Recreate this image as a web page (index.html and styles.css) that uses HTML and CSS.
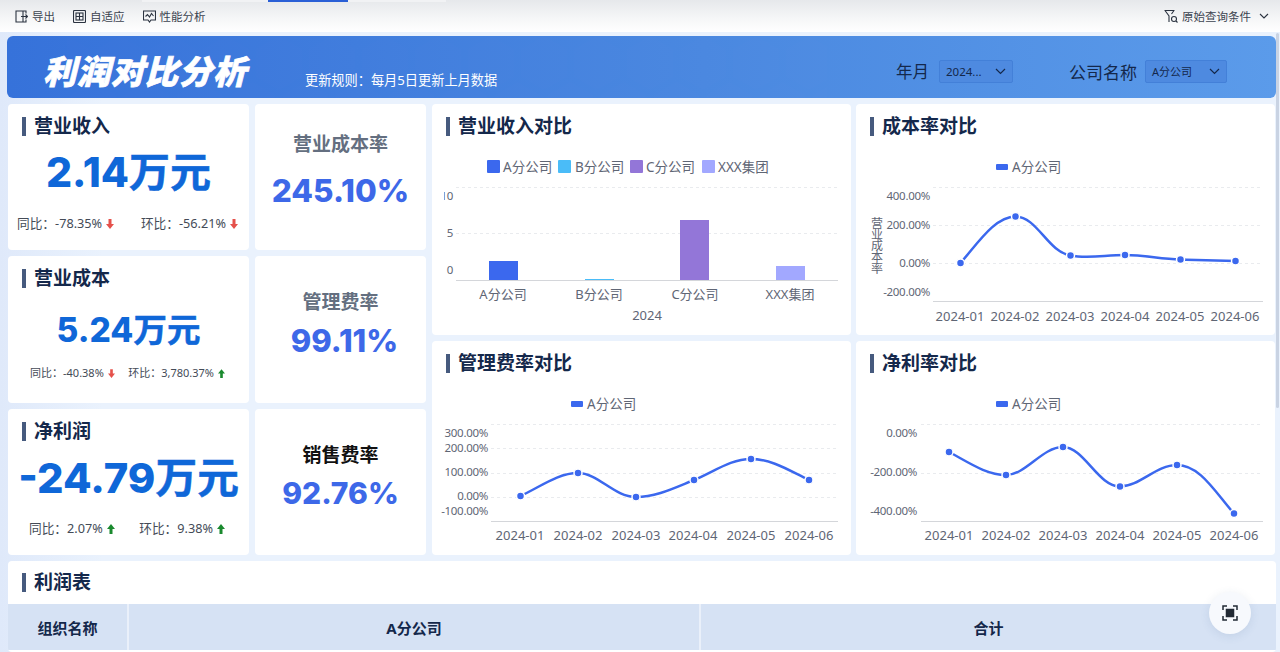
FILE: index.html
```html
<!DOCTYPE html>
<html lang="zh-CN">

<head>
  <meta charset="UTF-8" />
  <meta name="viewport" content="width=device-width, initial-scale=1.0" />
  <title>利润对比分析</title>
  <link rel="stylesheet" href="styles.css">
</head>

<body>
  <div class="toolbar">
    <i class="tab-line"><b></b></i>
    <a class="tool">
      <svg width="13" height="13" viewBox="0 0 13 13"><path d="M8 1H1v11h7zM8 1h3v2.500M8 12h3V9.500M6 6.500h6.500M10.500 4.500l2 2-2 2" /></svg>
      导出
    </a>
    <a class="tool">
      <svg width="13" height="13" viewBox="0 0 13 13"><rect x="0.500" y="0.500" width="12" height="12" rx="1" /><rect x="3" y="3" width="7" height="7" /><path d="M6.500 3v7M3 6.500h7" /></svg>
      自适应
    </a>
    <a class="tool">
      <svg width="13" height="13" viewBox="0 0 13 13"><path d="M0.500 1h12v9H8L6.500 12 5 10H0.500zM2.500 6.500l2-2 2 2.500 2-3.500 2 2.500" /></svg>
      性能分析
    </a>
    <a class="tool tool-right">
      <svg width="14" height="14" viewBox="0 0 14 14"><path d="M0.500 1.500h10M1 1.500 5 7v6M10 1.500 7.500 5" /><circle cx="10" cy="10" r="2.500" /><path d="m12 12 1.500 1.500" /></svg>
      原始查询条件
      <svg class="chev" width="10" height="6" viewBox="0 0 10 6"><path d="m1 1 4 4 4-4" /></svg>
    </a>
  </div>

  <div class="page">
    <i class="thumb"></i>

    <div class="banner">
      <svg class="hexes" width="760" height="62">
        <defs>
          <pattern id="hex" width="53" height="92" patternUnits="userSpaceOnUse" x="-26" y="0">
            <path d="M26 0 49 13V41L26 54 3 41V13z" />
            <path d="M52.500 46 75.500 59V87L52.500 100 29.500 87V59z" />
            <path d="M-0.500 46 22.500 59V87L-0.500 100-23.500 87V59z" />
          </pattern>
        </defs>
        <rect width="760" height="62" fill="url(#hex)" />
      </svg>
      <h1>利润对比分析</h1>
      <p class="rule">更新规则：每月5日更新上月数据</p>
      <div class="filters">
        <label>年月</label>
        <div class="select sel-date"><span>2024...</span><svg width="11" height="7" viewBox="0 0 11 7"><path d="m1 1 4.500 4.500L10 1" /></svg></div>
        <label class="company">公司名称</label>
        <div class="select sel-company"><span>A分公司</span><svg width="11" height="7" viewBox="0 0 11 7"><path d="m1 1 4.500 4.500L10 1" /></svg></div>
      </div>
    </div>

    <div class="board">
      <div class="kpis">
        <div class="card kpi">
          <h2 class="head">营业收入</h2>
          <div class="money">2.14<em>万元</em></div>
          <div class="stats">
            <span>同比：-78.35%<svg class="down" width="8" height="10" viewBox="0 0 8 10"><path d="M2.500 0h3v5H8L4 10 0 5h2.500z" /></svg></span>
            <span>环比：-56.21%<svg class="down" width="8" height="10" viewBox="0 0 8 10"><path d="M2.500 0h3v5H8L4 10 0 5h2.500z" /></svg></span>
          </div>
        </div>
        <div class="card rate">
          <h3>营业成本率</h3>
          <div class="pct">245.10%</div>
        </div>

        <div class="card kpi kpi-mid">
          <h2 class="head">营业成本</h2>
          <div class="money">5.24<em>万元</em></div>
          <div class="stats">
            <span>同比：-40.38%<svg class="down" width="7" height="9" viewBox="0 0 8 10"><path d="M2.500 0h3v5H8L4 10 0 5h2.500z" /></svg></span>
            <span>环比：3,780.37%<svg class="up" width="7" height="9" viewBox="0 0 8 10"><path d="M2.500 10h3V5H8L4 0 0 5h2.500z" /></svg></span>
          </div>
        </div>
        <div class="card rate rate-mid">
          <h3>管理费率</h3>
          <div class="pct">99.11%</div>
        </div>

        <div class="card kpi kpi-last">
          <h2 class="head">净利润</h2>
          <div class="money">-24.79<em>万元</em></div>
          <div class="stats">
            <span>同比：2.07%<svg class="up" width="8" height="10" viewBox="0 0 8 10"><path d="M2.500 10h3V5H8L4 0 0 5h2.500z" /></svg></span>
            <span>环比：9.38%<svg class="up" width="8" height="10" viewBox="0 0 8 10"><path d="M2.500 10h3V5H8L4 0 0 5h2.500z" /></svg></span>
          </div>
        </div>
        <div class="card rate rate-last">
          <h3>销售费率</h3>
          <div class="pct">92.76%</div>
        </div>
      </div>

      <div class="charts">
        <div class="card chart">
          <h2 class="head">营业收入对比</h2>
          <svg viewBox="432 148 419 187" width="419" height="187">
            <defs>
              <clipPath id="ylabels"><rect x="444" y="180" width="20" height="100" /></clipPath>
            </defs>
            <rect class="c-a" x="487" y="160" width="13" height="13" rx="1" /><text x="503" y="172">A分公司</text>
            <rect class="c-b" x="558" y="160" width="13" height="13" rx="1" /><text x="575" y="172">B分公司</text>
            <rect class="c-c" x="630" y="160" width="13" height="13" rx="1" /><text x="646" y="172">C分公司</text>
            <rect class="c-d" x="702" y="160" width="13" height="13" rx="1" /><text x="718" y="172">XXX集团</text>
            <path class="grid" d="M456 187.500H838M456 233.500H838" />
            <g clip-path="url(#ylabels)">
              <text class="yl" x="453" y="200">10</text>
              <text class="yl" x="453" y="237">5</text>
              <text class="yl" x="453" y="274">0</text>
            </g>
            <rect class="c-a" x="489" y="261" width="29" height="19" />
            <rect class="c-b" x="585" y="279" width="29" height="1" />
            <rect class="c-c" x="680" y="220" width="29" height="60" />
            <rect class="c-d" x="776" y="266" width="29" height="14" />
            <path class="axis" d="M456 280.500H838" />
            <text class="xl" x="503" y="299">A分公司</text>
            <text class="xl" x="599" y="299">B分公司</text>
            <text class="xl" x="695" y="299">C分公司</text>
            <text class="xl" x="790" y="299">XXX集团</text>
            <text class="xl" x="647" y="320">2024</text>
          </svg>
        </div>

        <div class="card chart">
          <h2 class="head">成本率对比</h2>
          <svg viewBox="856 148 419 187" width="419" height="187">
            <rect class="c-a" x="996" y="164" width="12" height="6" rx="1" /><text x="1012" y="172">A分公司</text>
            <path class="grid" d="M933 187.500H1263M933 225.500H1263M933 263.500H1263" />
            <text class="yl" x="930" y="200">400.00%</text>
            <text class="yl" x="930" y="229">200.00%</text>
            <text class="yl" x="930" y="267">0.00%</text>
            <text class="yl" x="930" y="296">-200.00%</text>
            <text class="side" x="876" y="217">营业成本率</text>
            <path class="axis" d="M933 301.500H1263" />
            <path class="line" d="M960.500 263C978 243 995 216.500 1015.500 216.500C1037 216.500 1048 252 1070.500 255.500C1088 259 1105 255 1125 255C1145 255 1160 259 1180.500 259.500C1200 260 1220 260.500 1235.500 261" />
            <circle class="dot" cx="960.500" cy="263" r="4" />
            <circle class="dot" cx="1015.500" cy="216.500" r="4" />
            <circle class="dot" cx="1070.500" cy="255.500" r="4" />
            <circle class="dot" cx="1125" cy="255" r="4" />
            <circle class="dot" cx="1180.500" cy="259.500" r="4" />
            <circle class="dot" cx="1235.500" cy="261" r="4" />
            <text class="xl" x="960" y="321">2024-01</text>
            <text class="xl" x="1015" y="321">2024-02</text>
            <text class="xl" x="1070" y="321">2024-03</text>
            <text class="xl" x="1125" y="321">2024-04</text>
            <text class="xl" x="1180" y="321">2024-05</text>
            <text class="xl" x="1235" y="321">2024-06</text>
          </svg>
        </div>

        <div class="card chart chart-low">
          <h2 class="head">管理费率对比</h2>
          <svg viewBox="432 385 419 170" width="419" height="170">
            <rect class="c-a" x="571" y="401" width="12" height="6" rx="1" /><text x="587" y="409">A分公司</text>
            <path class="grid" d="M491 424.500H838M491 448.500H838M491 473.500H838M491 497.500H838" />
            <text class="yl" x="488" y="437">300.00%</text>
            <text class="yl" x="488" y="452">200.00%</text>
            <text class="yl" x="488" y="476">100.00%</text>
            <text class="yl" x="488" y="500">0.00%</text>
            <text class="yl" x="488" y="515">-100.00%</text>
            <path class="axis" d="M491 521.500H838" />
            <path class="line" d="M520.500 496C540 487 558 473 578 473C598 473 614 497 636 497C656 497 674 488 694 480C714 472 730 459 751 459C772 459 790 471 809 480" />
            <circle class="dot" cx="520.500" cy="496" r="4" />
            <circle class="dot" cx="578" cy="473" r="4" />
            <circle class="dot" cx="636" cy="497" r="4" />
            <circle class="dot" cx="694" cy="480" r="4" />
            <circle class="dot" cx="751" cy="459" r="4" />
            <circle class="dot" cx="809" cy="480" r="4" />
            <text class="xl" x="520" y="540">2024-01</text>
            <text class="xl" x="578" y="540">2024-02</text>
            <text class="xl" x="636" y="540">2024-03</text>
            <text class="xl" x="693" y="540">2024-04</text>
            <text class="xl" x="751" y="540">2024-05</text>
            <text class="xl" x="809" y="540">2024-06</text>
          </svg>
        </div>

        <div class="card chart chart-low">
          <h2 class="head">净利率对比</h2>
          <svg viewBox="856 385 419 170" width="419" height="170">
            <rect class="c-a" x="996" y="401" width="12" height="6" rx="1" /><text x="1012" y="409">A分公司</text>
            <path class="grid" d="M921 424.500H1263M921 473.500H1263" />
            <text class="yl" x="917" y="437">0.00%</text>
            <text class="yl" x="917" y="476">-200.00%</text>
            <text class="yl" x="917" y="515">-400.00%</text>
            <path class="axis" d="M921 521.500H1263" />
            <path class="line" d="M949 452C968 462 986 475 1006 475C1026 475 1042 447 1063 447C1084 447 1098 486.500 1120 486.500C1140 486.500 1156 465 1177 465C1200 465 1215 492 1234 513.500" />
            <circle class="dot" cx="949" cy="452" r="4" />
            <circle class="dot" cx="1006" cy="475" r="4" />
            <circle class="dot" cx="1063" cy="447" r="4" />
            <circle class="dot" cx="1120" cy="486.500" r="4" />
            <circle class="dot" cx="1177" cy="465" r="4" />
            <circle class="dot" cx="1234" cy="513.500" r="4" />
            <text class="xl" x="949" y="540">2024-01</text>
            <text class="xl" x="1006" y="540">2024-02</text>
            <text class="xl" x="1063" y="540">2024-03</text>
            <text class="xl" x="1120" y="540">2024-04</text>
            <text class="xl" x="1177" y="540">2024-05</text>
            <text class="xl" x="1234" y="540">2024-06</text>
          </svg>
        </div>
      </div>
    </div>

    <div class="card profit">
      <h2 class="head">利润表</h2>
      <div class="thead">
        <div>组织名称</div>
        <div>A分公司</div>
        <div>合计</div>
      </div>
    </div>
  </div>

  <a class="fab">
    <svg width="16" height="16" viewBox="0 0 16 16"><path d="M1 5V1h4M11 1h4v4M15 11v4h-4M5 15H1v-4" /><rect x="4.500" y="4.500" width="7" height="7" /></svg>
  </a>
</body>

</html>
```

FILE: styles.css
```css
* {
  margin: 0;
  padding: 0;
  box-sizing: border-box;
}

body {
  width: 1280px;
  height: 652px;
  overflow: hidden;
  position: relative;
  font-family: "Noto Sans", "Noto Sans CJK SC", sans-serif;
  background: #eaf2fd;
}

/* toolbar */
.toolbar {
  height: 32px;
  padding: 0 11px 0 15px;
  display: flex;
  align-items: center;
  gap: 18px;
  position: relative;
  background: linear-gradient(#e6e8eb, #f6f7f8 60%, #fff);
}

.tab-line {
  position: absolute;
  left: 142px;
  top: 0;
  width: 304px;
  height: 2px;
  background: #f1f2f4;
}

.tab-line b {
  display: block;
  width: 80px;
  height: 2px;
  margin-left: 126px;
  background: #2a5fd6;
}

.tool {
  display: flex;
  align-items: center;
  gap: 4px;
  font-size: 11.500px;
  color: #3c4450;
}

.tool svg {
  fill: none;
  stroke: #2b3340;
  stroke-width: 1.100;
}

.tool-right {
  margin-left: auto;
}

.tool-right .chev {
  margin-left: 4px;
}

/* page */
.page {
  height: 620px;
  padding: 4px 4px 0 8px;
  position: relative;
  background: linear-gradient(90deg, #dfe9fa, #eaf2fd 8%);
}

.thumb {
  position: absolute;
  right: 1px;
  top: 1px;
  width: 3px;
  height: 375px;
  border-radius: 2px;
  background: #c9d3e3;
}

.card {
  background: #fff;
  border-radius: 4px;
}

.head {
  height: 44px;
  display: flex;
  align-items: center;
  font-size: 19px;
  font-weight: 700;
  line-height: 1;
  color: #14284b;
}

.head::before {
  content: "";
  width: 3.500px;
  height: 19px;
  margin-right: 8.500px;
  background: #465a7e;
}

/* banner */
.banner {
  height: 62px;
  margin: 0 0 6px -1px;
  padding: 0 49px 0 36px;
  display: flex;
  position: relative;
  overflow: hidden;
  border-radius: 6px;
  background: linear-gradient(90deg, #3672da, #4a88e0 55%, #5b9bea);
}

.hexes {
  position: absolute;
  left: 60px;
  top: 0;
  fill: #fff;
  fill-opacity: 0.06;
}

.banner h1 {
  position: relative;
  font-size: 33px;
  font-weight: 900;
  font-style: italic;
  line-height: 72px;
  letter-spacing: 1px;
  color: #fff;
  -webkit-text-stroke: 0.700px #fff;
}

.rule {
  position: relative;
  margin: 34px 0 0 58px;
  font-size: 13.200px;
  line-height: 20px;
  color: #fff;
}

.filters {
  margin-left: auto;
  position: relative;
  display: flex;
  align-items: center;
  height: 72px;
  margin-top: -1px;
}

.filters label {
  font-size: 16.500px;
  color: #14284b;
  margin-right: 10px;
}

.filters .company {
  margin-left: 56px;
  margin-right: 8px;
  font-size: 17px;
}

.select {
  height: 23px;
  display: flex;
  align-items: center;
  justify-content: space-between;
  padding: 0 6px;
  font-size: 11px;
  color: #14284b;
  border: 1px solid #4380d8;
  border-radius: 2px;
  background: #4e8ae0;
}

.select svg {
  fill: none;
  stroke: #14284b;
  stroke-width: 1.200;
}

.sel-date {
  width: 74px;
  font-size: 11.500px;
}

.sel-company {
  width: 82px;
}

/* upper area */
.board {
  display: flex;
  gap: 6px;
}

.kpis {
  width: 418px;
  height: 451px;
  display: grid;
  grid-template-columns: 241px 171px;
  grid-template-rows: 146px 147px 146px;
  gap: 6px;
}

.kpi {
  padding: 0 0 0 14px;
}

.money {
  margin: -1px 0 0 -14px;
  text-align: center;
  font-family: Inter, "Noto Sans CJK SC", sans-serif;
  font-size: 41px;
  font-weight: 800;
  line-height: 50px;
  color: #0f67d8;
}

.money em {
  font-style: normal;
  font-weight: 700;
  -webkit-text-stroke: 0.500px #0f67d8;
}

.stats {
  margin: 17px 11px 0 -5px;
  display: flex;
  justify-content: space-between;
  white-space: nowrap;
  font-size: 12.700px;
  line-height: 18px;
  color: #444b57;
}

.stats svg {
  margin-left: 4px;
  vertical-align: -1px;
}

.down {
  fill: #e5514b;
}

.up {
  fill: #1a8a2e;
}

.kpi-mid .money {
  margin-top: 5px;
  font-size: 33.500px;
}

.kpi-mid .stats {
  margin: 9px 24px 0 8px;
  font-size: 11px;
}

.kpi-last .money {
  margin-top: 0;
  font-size: 41.700px;
  font-weight: 800;
}

.kpi-last .stats {
  margin: 16px 24px 0 7px;
}

.rate {
  padding-top: 28px;
  text-align: center;
}

.rate h3 {
  font-size: 19px;
  font-weight: 700;
  line-height: 24px;
  color: #646f80;
}

.pct {
  margin-top: 15px;
  font-family: Inter, sans-serif;
  font-size: 31.500px;
  font-weight: 800;
  line-height: 40px;
  color: #3d68e8;
}

.rate-mid {
  padding-top: 34px;
}

.rate-mid .pct {
  margin-top: 7px;
  padding-left: 8px;
  font-size: 31px;
}

.rate-last {
  padding-top: 34px;
}

.rate-last h3 {
  color: #111;
}

.rate-last .pct {
  margin-top: 6px;
  font-size: 30px;
}

/* charts */
.charts {
  width: 843px;
  height: 451px;
  display: grid;
  grid-template-columns: 419px 419px;
  grid-template-rows: 231px 214px;
  gap: 6px 5px;
}

.chart {
  overflow: hidden;
}

.chart .head {
  padding-left: 14px;
}

.chart svg {
  display: block;
}

.chart text {
  font-size: 13.500px;
  fill: #5f6675;
}

.chart .yl {
  font-size: 11.500px;
  letter-spacing: -0.300px;
  text-anchor: end;
}

.chart .xl {
  font-size: 13px;
  text-anchor: middle;
}

.chart .side {
  font-size: 12px;
  writing-mode: vertical-rl;
  letter-spacing: -0.700px;
}

.grid {
  fill: none;
  stroke: #e9ebee;
  stroke-dasharray: 3 3;
}

.axis {
  fill: none;
  stroke: #d4d6da;
}

.line {
  fill: none;
  stroke: #3b68ee;
  stroke-width: 2.500;
}

.dot {
  fill: #3b68ee;
  stroke: #fff;
  stroke-width: 1.500;
}

.c-a {
  fill: #3b68ee;
}

.c-b {
  fill: #4abcf8;
}

.c-c {
  fill: #9376d8;
}

.c-d {
  fill: #a2a8ff;
}

/* table */
.profit {
  margin-top: 6px;
  width: 1268px;
  height: 91px;
  overflow: hidden;
}

.profit > .head {
  height: 43px;
  padding-left: 14px;
}

.thead {
  height: 46px;
  display: grid;
  grid-template-columns: 119px 570px 1fr;
  gap: 2px;
  background: #eaf0fa;
}

.thead div {
  display: flex;
  align-items: center;
  justify-content: center;
  font-size: 15px;
  font-weight: 700;
  color: #14284b;
  background: #d6e2f4;
}

/* floating button */
.fab {
  position: absolute;
  left: 1209px;
  top: 592px;
  width: 42px;
  height: 42px;
  display: flex;
  align-items: center;
  justify-content: center;
  border-radius: 50%;
  background: #f7f9fd;
  box-shadow: 0 2px 10px rgba(60, 90, 140, 0.12);
}

.fab svg {
  fill: none;
  stroke: #222a35;
  stroke-width: 1.500;
}

.fab rect {
  fill: #222a35;
}
```
